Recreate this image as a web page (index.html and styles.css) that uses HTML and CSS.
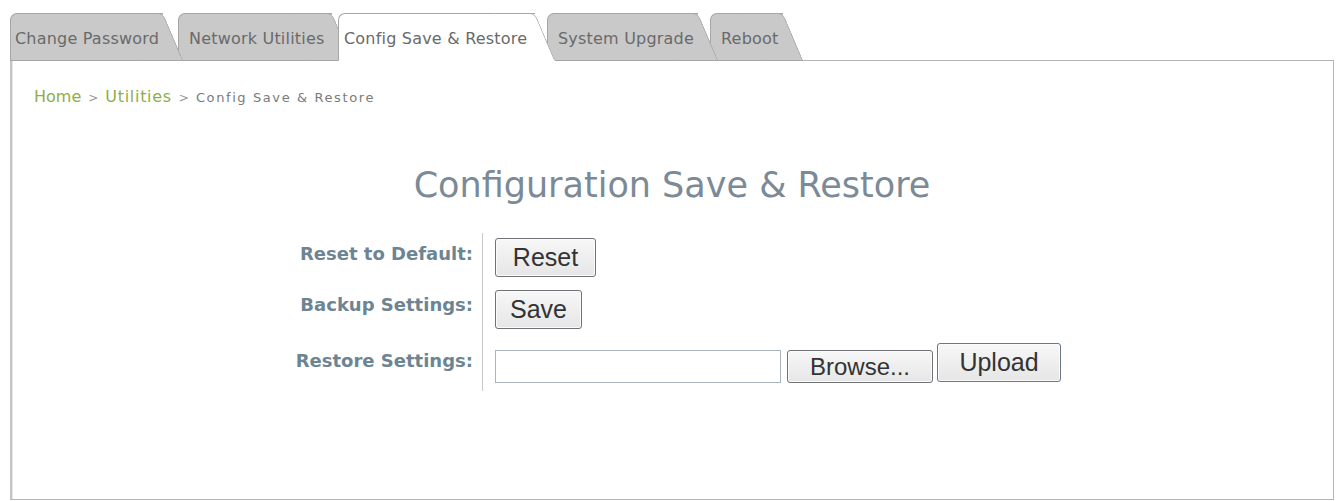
FILE: index.html
```html
<!DOCTYPE html>
<html lang="en">
<head>
<meta charset="utf-8">
<title>Config Save &amp; Restore</title>
<link rel="stylesheet" href="styles.css">
</head>
<body>
<div class="page">
  <nav class="tabs">
    <div class="tab tab-1">Change Password</div>
    <div class="tab tab-2">Network Utilities</div>
    <div class="tab tab-3 active">Config Save &amp; Restore</div>
    <div class="tab tab-4">System Upgrade</div>
    <div class="tab tab-5">Reboot</div>
  </nav>
  <section class="panel">
    <div class="crumbs"><span class="crumb-link">Home</span><span class="crumb-sep">&gt;</span><span class="crumb-link">Utilities</span><span class="crumb-sep">&gt;</span><span class="crumb-current">Config Save &amp; Restore</span></div>
    <h1 class="title">Configuration Save &amp; Restore</h1>
    <div class="form">
      <div class="label row-1">Reset to Default:</div>
      <div class="divider"></div>
      <div class="ctrl row-1"><button class="btn btn-reset">Reset</button></div>
      <div class="label row-2">Backup Settings:</div>
      <div class="ctrl row-2"><button class="btn btn-save">Save</button></div>
      <div class="label row-3">Restore Settings:</div>
      <div class="ctrl row-3">
        <span class="file-field"></span>
        <button class="btn btn-browse">Browse...</button>
        <button class="btn btn-upload">Upload</button>
      </div>
    </div>
  </section>
</div>
</body>
</html>
```

FILE: styles.css
```css
html, body {
  margin: 0;
  padding: 0;
  background: #ffffff;
}

body {
  font-family: "DejaVu Sans", Verdana, sans-serif;
  color: #555;
}

.page {
  padding: 13px 3px 0 10px;
}

/* ---------- tabs ---------- */
.tabs {
  display: flex;
  position: relative;
  z-index: 2;
  height: 48px;
  margin-bottom: -1px;
}

.tab {
  position: relative;
  box-sizing: border-box;
  height: 48px;
  display: flex;
  align-items: center;
  padding-top: 3px;
  background: #c9c9c9;
  border: 1px solid #a6a6a6;
  border-right: 0;
  border-top-left-radius: 7px;
  font-size: 16px;
  letter-spacing: 0.2px;
  color: #6a6a6a;
  white-space: nowrap;
}

.tab::after {
  content: "";
  position: absolute;
  top: -1px;
  bottom: -1px;
  right: 0;
  width: 40px;
  background: inherit;
  border-top: 1px solid #a6a6a6;
  border-right: 1px solid #a6a6a6;
  border-bottom: 1px solid #a6a6a6;
  border-top-right-radius: 6px;
  transform: skewX(23deg);
  transform-origin: top left;
  z-index: -1;
}

.tab-1 { width: 153px; padding-left: 4px; margin-right: 15px; z-index: 5; }
.tab-2 { width: 154px; padding-left: 10px; margin-right: 6px; z-index: 4; }
.tab-3 { width: 197px; padding-left: 5px; margin-right: 12px; z-index: 10; }
.tab-4 { width: 151px; padding-left: 10px; margin-right: 12px; z-index: 3; }
.tab-5 { width: 73px; padding-left: 10px; z-index: 2; }

.tab.active {
  background: #ffffff;
  border-bottom-color: #ffffff;
}
.tab.active::after {
  border-bottom-color: #ffffff;
}

/* ---------- panel ---------- */
.panel {
  position: relative;
  z-index: 1;
  box-sizing: border-box;
  height: 440px;
  border: 1px solid #b5b5b5;
  border-left: 2px solid #c4c4c4;
  box-shadow: inset 1px 0 0 #e6e6e6;
  padding: 26px 0 0 22px;
}

.crumbs {
  line-height: 20px;
  height: 20px;
  white-space: nowrap;
}

.crumb-link {
  font-size: 16px;
  color: #8fae45;
}

.crumb-link + .crumb-sep + .crumb-link {
  letter-spacing: 0.7px;
}

.crumb-sep {
  font-size: 12px;
  color: #999;
  margin: 0 7px;
}

.crumb-current {
  font-size: 13px;
  letter-spacing: 1.6px;
  color: #7a7a7a;
}

.title {
  margin: 58px 0 0 0;
  font-weight: normal;
  font-size: 35px;
  line-height: 40px;
  height: 40px;
  color: #7b8a96;
  text-align: center;
  padding-right: 23px;
}

/* ---------- form ---------- */
.form {
  display: grid;
  grid-template-columns: 240px 1px auto;
  grid-template-rows: 50px 56px 52px;
  margin: 28px 0 0 0;
  padding-left: 208px;
}

.label {
  grid-column: 1;
  text-align: right;
  padding-right: 9px;
  font-weight: bold;
  font-size: 18px;
  line-height: 20px;
  color: #6d8493;
  white-space: nowrap;
}

.label.row-1 { grid-row: 1; padding-top: 11px; }
.label.row-2 { grid-row: 2; padding-top: 12px; }
.label.row-3 { grid-row: 3; padding-top: 12px; }

.divider {
  grid-column: 2;
  grid-row: 1 / 4;
  background: #c8c8c8;
}

.ctrl {
  grid-column: 3;
  padding-left: 12px;
  display: flex;
  align-items: flex-start;
}

.ctrl.row-1 { grid-row: 1; padding-top: 5px; }
.ctrl.row-2 { grid-row: 2; padding-top: 7px; }
.ctrl.row-3 { grid-row: 3; padding-top: 4px; }

.btn {
  box-sizing: border-box;
  height: 39px;
  margin: 0;
  padding: 0;
  font-family: "Liberation Sans", Arial, sans-serif;
  font-size: 25px;
  color: #333;
  background: linear-gradient(#f7f7f7, #e6e6e6);
  border: 1px solid #6f7276;
  border-radius: 3px;
  box-shadow: inset 0 0 0 1px #fbfbfb;
}

.btn-reset { width: 101px; }
.btn-save { width: 87px; }
.btn-browse {
  width: 146px;
  height: 33px;
  margin-top: 7px;
  margin-left: 6px;
  font-size: 24px;
  line-height: 28px;
}
.btn-upload {
  width: 124px;
  margin-left: 4px;
  border-color: #6b7786;
}

.file-field {
  box-sizing: border-box;
  display: block;
  width: 286px;
  height: 33px;
  margin-top: 7px;
  background: #fff;
  border: 1px solid #a8b4c0;
}
```
